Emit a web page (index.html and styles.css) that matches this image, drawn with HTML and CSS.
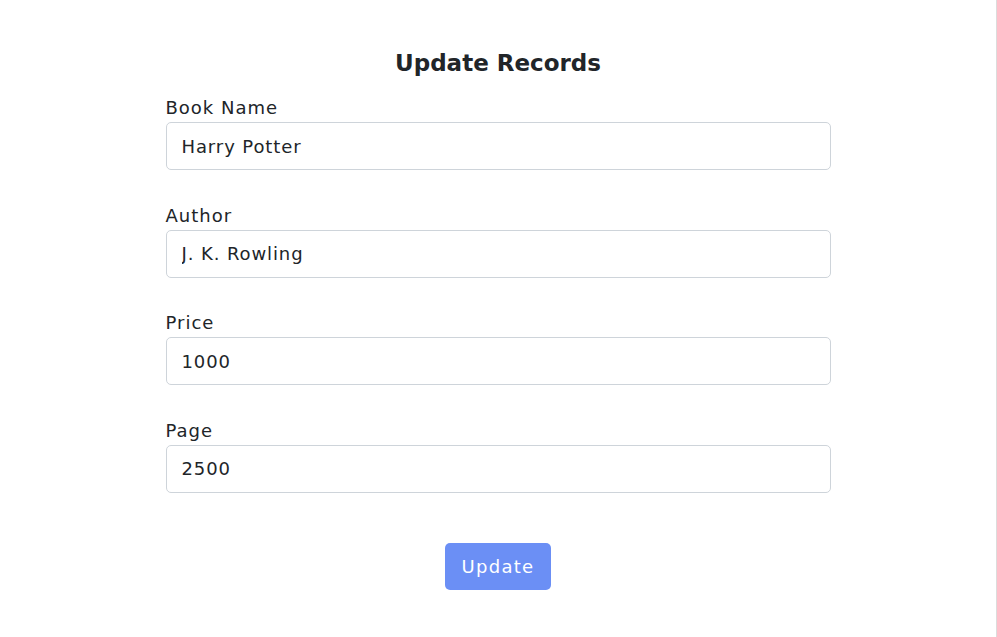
FILE: index.html
```html
<!DOCTYPE html>
<html>
<head>
<meta charset="utf-8">
<link rel="stylesheet" href="styles.css">
</head>
<body>
<div class="page">
  <form class="form">
    <h2 class="title">Update Records</h2>
    <div class="field">
      <label class="label">Book Name</label>
      <input class="input" type="text" value="Harry Potter">
    </div>
    <div class="field">
      <label class="label">Author</label>
      <input class="input" type="text" value="J. K. Rowling">
    </div>
    <div class="field">
      <label class="label">Price</label>
      <input class="input" type="text" value="1000">
    </div>
    <div class="field">
      <label class="label">Page</label>
      <input class="input" type="text" value="2500">
    </div>
    <div class="actions">
      <button class="btn" type="button">Update</button>
    </div>
  </form>
</div>
</body>
</html>
```
FILE: styles.css
```css
* { box-sizing: border-box; }
html, body { margin: 0; padding: 0; background: #fff; }
body { font-family: "DejaVu Sans", sans-serif; color: #212529; }
.page {
  height: 637px;
  border-right: 1px solid #dcdcdc;
  padding-top: 48px;
}
.form {
  width: 665px;
  margin: 0 auto;
  display: flex;
  flex-direction: column;
}
.title {
  margin: 0 0 17px;
  text-align: center;
  font-size: 23px;
  font-weight: 700;
  line-height: 30px;
  color: #212529;
}
.field {
  display: flex;
  flex-direction: column;
  margin-bottom: 32.5px;
}
.label {
  font-size: 18px;
  line-height: 26px;
  letter-spacing: 1px;
  margin-bottom: 1px;
}
.input {
  height: 48px;
  border: 1px solid #ced4da;
  border-radius: 5px;
  padding: 0 15px;
  font-family: inherit;
  font-size: 18px;
  letter-spacing: 0.9px;
  color: #212529;
  outline: none;
}
.actions {
  display: flex;
  justify-content: center;
  margin-top: 17.5px;
}
.btn {
  width: 106px;
  height: 47px;
  border: none;
  border-radius: 5px;
  background: #6b8ff5;
  color: #fff;
  font-family: inherit;
  font-size: 18px;
  letter-spacing: 1.3px;
}
```
